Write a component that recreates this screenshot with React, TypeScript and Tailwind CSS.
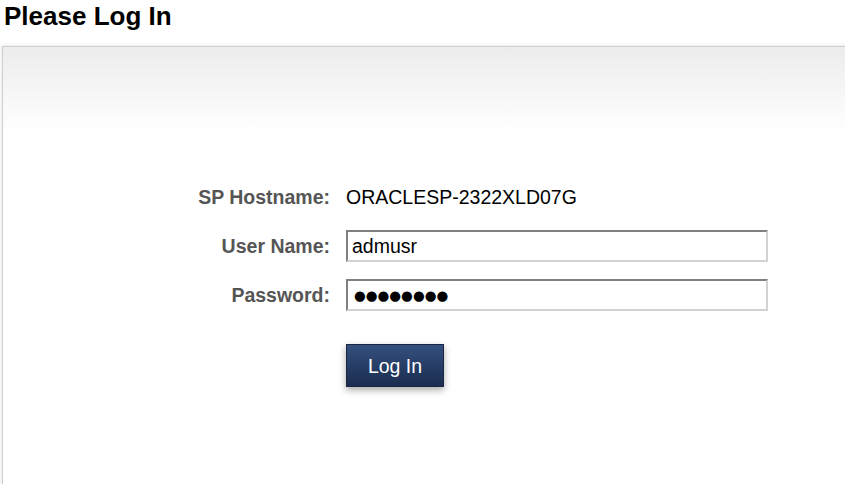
import React, { useState } from 'react';

const LoginRow: React.FC<{ label: string; children: React.ReactNode }> = ({ label, children }) => (
  <div className="flex h-[32px] items-center">
    <div className="w-[327px] shrink-0 text-right font-bold text-[#555555]">{label}</div>
    <div className="ml-[16px] flex items-center">{children}</div>
  </div>
);

const fieldClass =
  'h-[32px] w-[422px] border-2 border-t-[#808080] border-l-[#808080] border-b-[#d2d2d2] border-r-[#d2d2d2] bg-white px-[4px] text-black outline-none';

const App: React.FC = () => {
  const [user, setUser] = useState('admusr');
  const [pass, setPass] = useState('12345678');

  return (
    <div className="h-[484px] w-full overflow-hidden bg-white font-['Liberation_Sans',Arial,sans-serif] text-[19.5px] leading-[22px] text-black">
      <h1 className="pl-[4px] pt-[1px] text-[26px] font-bold leading-[30px]">Please Log In</h1>
      <div className="ml-[2px] -mr-[20px] mt-[15px] h-[520px] border border-[#cfcfcf] bg-gradient-to-b from-[#ececec] to-white to-[85px] shadow-[0_0_5px_rgba(0,0,0,0.12)]">
        <form className="flex flex-col gap-[17px] pt-[134px]" onSubmit={(e) => e.preventDefault()}>
          <LoginRow label="SP Hostname:">
            <span>ORACLESP-2322XLD07G</span>
          </LoginRow>
          <LoginRow label="User Name:">
            <input type="text" value={user} onChange={(e) => setUser(e.target.value)} className={`${fieldClass} text-[19.5px]`} />
          </LoginRow>
          <LoginRow label="Password:">
            <input
              type="text"
              value={'●'.repeat(pass.length)}
              onChange={(e) => setPass('x'.repeat(e.target.value.length))}
              className={`${fieldClass} pl-[6px] font-['DejaVu_Sans',sans-serif] text-[13.5px]`}
            />
          </LoginRow>
          <div className="mt-[16px] flex">
            <div className="w-[327px] shrink-0" />
            <button
              type="submit"
              className="ml-[16px] h-[43px] w-[98px] border border-[#1a2744] bg-gradient-to-b from-[#34507f] to-[#1b2c4f] text-[19.5px] text-white shadow-[0_3px_7px_rgba(0,0,0,0.35)]"
            >
              Log In
            </button>
          </div>
        </form>
      </div>
    </div>
  );
};

export default App;
